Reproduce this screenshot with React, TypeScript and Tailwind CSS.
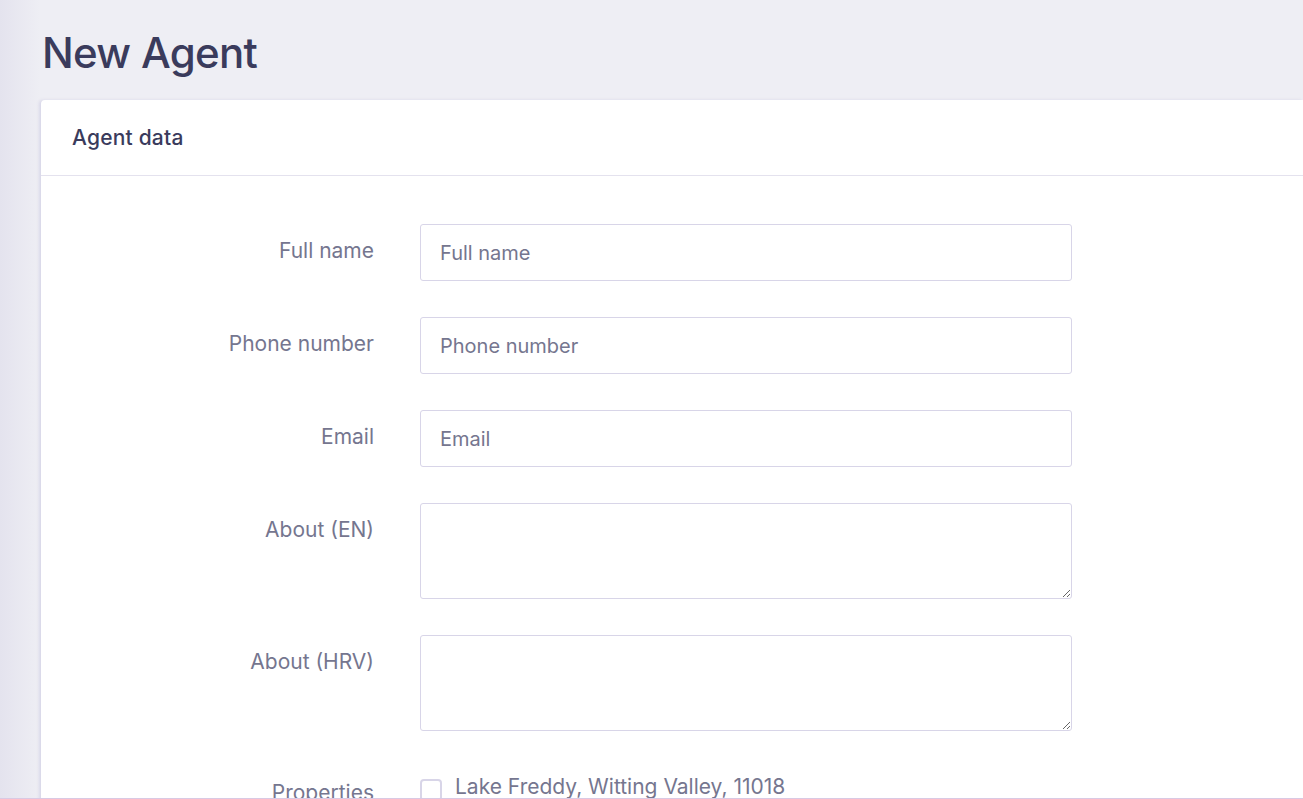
import React from 'react';

const FIELDS = [
  { label: 'Full name', placeholder: 'Full name' },
  { label: 'Phone number', placeholder: 'Phone number' },
  { label: 'Email', placeholder: 'Email' },
];

const AREAS = ['About (EN)', 'About (HRV)'];

export default function App() {
  return (
    <div
      className="h-[799px] w-[1303px] overflow-hidden bg-[#eeeef4] relative border-b border-[#d9c9e3]"
      style={{ fontFamily: 'Inter, "Open Sans", sans-serif' }}
    >
      <div className="pointer-events-none absolute inset-y-0 left-0 w-[40px] bg-gradient-to-r from-[#e4e3ee] to-transparent" />
      <div className="relative pl-[41px]">
        <h1 className="pt-[28px] pb-[22px] pl-[1px] text-[42px] leading-[50px] font-medium tracking-[-0.7px] text-[#3a3b5c]">New Agent</h1>
        <div className="bg-white rounded-tl-[4px] shadow-[-2px_0_3px_rgba(190,188,220,0.45)]">
          <div className="h-[76px] flex items-center pl-[31px] border-b border-[#e4e2ee]">
            <h2 className="text-[21px] font-medium tracking-[0.2px] text-[#3a3b5c]">Agent data</h2>
          </div>
          <div className="pt-[48px] flex flex-col gap-[36px]">
            {FIELDS.map(f => (
              <div key={f.label} className="flex">
                <label className="w-[333px] text-right text-[21px] leading-[28px] text-[#75768f] pt-[13px]">{f.label}</label>
                <input
                  placeholder={f.placeholder}
                  className="ml-[46px] w-[652px] h-[57px] border border-[#d8d5e8] rounded-[3px] px-[19px] text-[20px] text-[#3a3b5c] placeholder:text-[#75768f] outline-none"
                />
              </div>
            ))}
            {AREAS.map(a => (
              <div key={a} className="flex">
                <label className="w-[333px] text-right text-[21px] leading-[28px] text-[#75768f] pt-[13px]">{a}</label>
                <textarea className="ml-[46px] w-[652px] h-[96px] border border-[#d8d5e8] rounded-[3px] px-[19px] py-[12px] text-[20px] outline-none block" />
              </div>
            ))}
            <div className="flex">
              <label className="w-[333px] text-right text-[21px] text-[#75768f] pt-[12px] leading-[28px]">Properties</label>
              <label className="ml-[46px] pt-[6px] flex items-start gap-[13px] text-[21px] leading-[28px] text-[#75768f]">
                <span className="mt-[6px] w-[22px] h-[22px] rounded-[4px] border-2 border-[#d8d5e8] bg-white" />
                Lake Freddy, Witting Valley, 11018
              </label>
            </div>
          </div>
        </div>
      </div>
    </div>
  );
}
